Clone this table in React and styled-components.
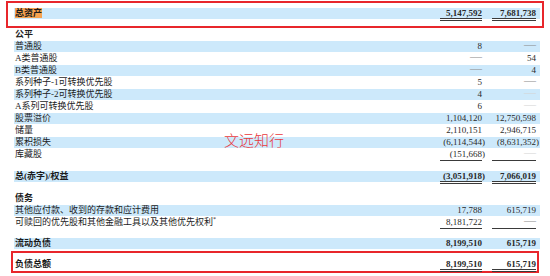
import React from "react";
import styled, { createGlobalStyle } from "styled-components";

const Global = createGlobalStyle`
  html, body {
    margin: 0;
    background: #ffffff;
  }
  body {
    font-family: "Liberation Serif", "Noto Sans CJK SC", serif;
  }
`;

const Page = styled.div`
  position: relative;
  width: 550px;
  height: 276px;
  overflow: hidden;
  padding-top: 1px;
  box-sizing: border-box;
  background: #ffffff;
  font-size: 9px;
  color: #1c1c1c;
`;

/* red annotation boxes drawn around the key lines */
const Callout = styled.div`
  box-sizing: border-box;
  width: ${(p) => p.$w}px;
  margin-left: ${(p) => p.$ml}px;
  padding: ${(p) => p.$pad};
  border: 2px solid #e8262b;
`;

const Table = styled.div`
  display: flex;
  flex-direction: column;
  width: 526px;
  padding: 1px 0 1px 14px;
`;

const Row = styled.div`
  display: flex;
  align-items: center;
  height: 11px;
  line-height: 11px;
  margin-bottom: 1px;
  padding-right: ${(p) => p.$pr ?? 4}px;
  background: ${(p) => (p.$stripe ? "#cde9fb" : "transparent")};
  font-weight: ${(p) => (p.$bold ? 700 : 400)};
`;

const Spacer = styled.div`
  height: ${(p) => p.$h}px;
`;

const Label = styled.div`
  flex: 1;
  padding-left: 1px;
  white-space: nowrap;
`;

const Mark = styled.span`
  background: #f6a24f;
`;

const Sup = styled.sup`
  font-size: 6px;
  line-height: 0;
`;

const Figures = styled.div`
  display: flex;
  gap: 10px;
`;

const Num = styled.div`
  position: relative;
  width: ${(p) => p.$w}px;
  height: 11px;
  text-align: right;
  color: #2a2a2a;
  white-space: nowrap;

  &::after {
    content: "";
    position: absolute;
    left: 0;
    right: 0;
    top: ${(p) => (p.$ul === "double" ? 10 : 11)}px;
    height: ${(p) => (p.$ul === "double" ? 1 : 0)}px;
    border-top: ${(p) => (p.$ul ? "1px solid #3a3a3a" : "none")};
    border-bottom: ${(p) => (p.$ul === "double" ? "1px solid #3a3a3a" : "none")};
  }
`;

const Paren = styled.span`
  margin-right: -3px;
`;

const Dash = styled.span`
  display: inline-block;
  font-size: 12px;
  line-height: 9px;
  transform: translateY(-1px);
  color: ${(p) => (p.$faint ? "#d4d4d4" : "#8a8a8a")};
`;

const Watermark = styled.div`
  position: absolute;
  left: 224px;
  top: 129px;
  font-family: "Noto Sans CJK SC", sans-serif;
  font-size: 15px;
  font-weight: 300;
  color: #e8383d;
`;

const body = [
  { label: "公平", bold: true },
  { label: "普通股", stripe: true, a: "8", b: "-" },
  { label: "A类普通股", a: "-", b: "54" },
  { label: "B类普通股", stripe: true, a: "-", b: "4" },
  { label: "系列种子-1可转换优先股", a: "5", b: "-" },
  { label: "系列种子-2可转换优先股", stripe: true, a: "4", b: "~" },
  { label: "A系列可转换优先股", a: "6", b: "~" },
  { label: "股票溢价", stripe: true, a: "1,104,120", b: "12,750,598" },
  { label: "储量", a: "2,110,151", b: "2,946,715" },
  { label: "累积损失", stripe: true, a: "(6,114,544)", b: "(8,631,352)" },
  { label: "库藏股", a: "(151,668)", b: "~", ul: "single" },
  { space: 10 },
  { label: "总(赤字)/权益", bold: true, stripe: true, a: "(3,051,918)", b: "7,066,019", ul: "double" },
  { space: 10 },
  { label: "债务", bold: true },
  { label: "其他应付款、收到的存款和应计费用", stripe: true, a: "17,788", b: "615,719" },
  { label: <>可赎回的优先股和其他金融工具以及其他优先权利<Sup>*</Sup></>, a: "8,181,722", b: "-", ul: "single" },
  { space: 9 },
  { label: "流动负债", bold: true, stripe: true, a: "8,199,510", b: "615,719" },
];

function Value({ v }) {
  if (v === undefined) return null;
  if (v === "-") return <Dash>—</Dash>;
  if (v === "~") return <Dash $faint>—</Dash>;
  if (v.startsWith("(")) {
    return (
      <>
        {v.slice(0, -1)}
        <Paren>)</Paren>
      </>
    );
  }
  return v;
}

function Line({ r, pr }) {
  return (
    <Row $stripe={r.stripe} $bold={r.bold} $pr={pr}>
      <Label>{r.label}</Label>
      {r.a !== undefined && (
        <Figures>
          <Num $w={42} $ul={r.ul}>
            <Value v={r.a} />
          </Num>
          <Num $w={44} $ul={r.ul}>
            <Value v={r.b} />
          </Num>
        </Figures>
      )}
    </Row>
  );
}

export default function App() {
  return (
    <Page>
      <Global />
      <Callout $w={538} $ml={6} $pad="5px 2px 6px 6px">
        <Line
          r={{ label: <Mark>总资产</Mark>, bold: true, stripe: true, a: "5,147,592", b: "7,681,738", ul: "double" }}
        />
      </Callout>
      <Table>
        {body.map((r, i) =>
          r.space ? <Spacer key={i} $h={r.space} /> : <Line key={i} r={r} />
        )}
      </Table>
      <Callout $w={528} $ml={11} $pad="6px 0 0 1px">
        <Line
          pr={1}
          r={{ label: "负债总额", bold: true, a: "8,199,510", b: "615,719", ul: "double" }}
        />
      </Callout>
      <Watermark>文远知行</Watermark>
    </Page>
  );
}
